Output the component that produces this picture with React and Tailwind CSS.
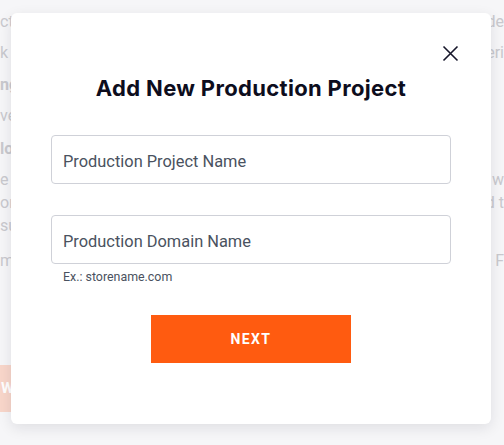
import React, { useState } from "react";

// faded page content behind the modal (only the edges show)
const BG_LINES = [
  { top: 13, left: "ction", right: "de", bold: false },
  { top: 44, left: "k to", right: "eri", bold: false },
  { top: 76, left: "ng", right: "", bold: true },
  { top: 107, left: "ve", right: "", bold: false },
  { top: 140, left: "lo", right: "", bold: true },
  { top: 171, left: "e s", right: "n w", bold: false },
  { top: 194, left: "or", right: "d t", bold: false },
  { top: 217, left: "su", right: "", bold: false },
  { top: 252, left: "m", right: "e F", bold: false },
];

const App = () => {
  const [name, setName] = useState("");
  const [domain, setDomain] = useState("");

  return (
    <div className="relative w-[504px] h-[445px] overflow-hidden bg-[#f6f6f8] font-['Roboto',sans-serif]">
      {/* ---------- background page ---------- */}
      {BG_LINES.map((l) => (
        <div
          key={l.top}
          className={
            "absolute left-0 right-0 flex justify-between text-[16px] leading-[18px] text-[#c9c9ce] " +
            (l.bold ? "font-bold" : "")
          }
          style={{ top: l.top }}
        >
          <span>{l.left}</span>
          <span>{l.right}</span>
        </div>
      ))}
      <div className="absolute left-[-40px] top-[365px] w-[60px] h-[47px] bg-[#f8d6ca] flex items-center justify-end pr-[6px] text-white font-bold text-[15px]">
        W
      </div>

      {/* ---------- modal ---------- */}
      <div className="absolute inset-0 flex items-start pl-[11px] pt-[13px]">
        <div className="relative w-[480px] h-[411px] bg-white rounded-[6px] shadow-[0_4px_14px_rgba(20,20,40,0.10)] px-[40px] pt-[61px]">
          <button className="absolute top-[32px] right-[32px] w-[17px] h-[17px] flex items-center justify-center text-[#16162a]">
            <svg width="17" height="17" viewBox="0 0 17 17" fill="none">
              <path
                d="M1.5 1.5L15.5 15.5M15.5 1.5L1.5 15.5"
                stroke="currentColor"
                strokeWidth="1.6"
              />
            </svg>
          </button>

          <h2 className="text-center text-[22px] leading-[28px] font-bold tracking-[0.015em] text-[#0d0d1d] font-['Inter',sans-serif]">
            Add New Production Project
          </h2>

          <input
            value={name}
            onChange={(e) => setName(e.target.value)}
            placeholder="Production Project Name"
            className="block w-full h-[49px] mt-[33px] px-[11px] pt-[3px] border border-[#cfd1d8] rounded-[4px] text-[16.4px] text-[#4a5260] placeholder:text-[#4a5260] outline-none"
          />

          <input
            value={domain}
            onChange={(e) => setDomain(e.target.value)}
            placeholder="Production Domain Name"
            className="block w-full h-[49px] mt-[31px] px-[11px] pt-[3px] border border-[#cfd1d8] rounded-[4px] text-[16.4px] text-[#4a5260] placeholder:text-[#4a5260] outline-none"
          />
          <p className="mt-[5px] pl-[12px] text-[12.4px] leading-[16px] text-[#4a5260]">
            Ex.: storename.com
          </p>

          <div className="flex justify-center mt-[30px]">
            <button className="w-[200px] h-[48px] bg-[#ff5b10] text-white text-[14px] font-bold tracking-[0.1em]">
              NEXT
            </button>
          </div>
        </div>
      </div>
    </div>
  );
};

export default App;
